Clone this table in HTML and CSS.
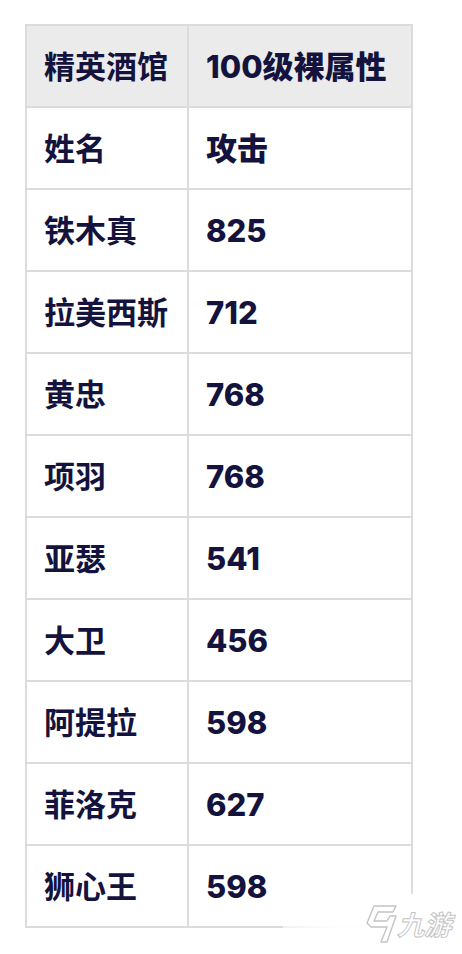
FILE: index.html
```html
<!DOCTYPE html>
<html lang="zh">
<head>
<meta charset="utf-8">
<link rel="stylesheet" href="styles.css">
</head>
<body>
<table class="stats">
  <thead>
    <tr><th>精英酒馆</th><th>100级裸属性</th></tr>
  </thead>
  <tbody>
    <tr><td>姓名</td><td>攻击</td></tr>
    <tr><td>铁木真</td><td>825</td></tr>
    <tr><td>拉美西斯</td><td>712</td></tr>
    <tr><td>黄忠</td><td>768</td></tr>
    <tr><td>项羽</td><td>768</td></tr>
    <tr><td>亚瑟</td><td>541</td></tr>
    <tr><td>大卫</td><td>456</td></tr>
    <tr><td>阿提拉</td><td>598</td></tr>
    <tr><td>菲洛克</td><td>627</td></tr>
    <tr><td>狮心王</td><td>598</td></tr>
  </tbody>
</table>
<div class="watermark">
  <svg class="wm-logo" width="38" height="44" viewBox="0 0 38 44">
    <path d="M12 4 L34 4 L31 10 L16 10 L12 19 L25 19 L28 14 L34 14 L25 40 L19 40 L25 25 L9 25 L5 21 Z" fill="none" stroke="#c4c4c4" stroke-width="1.4" stroke-linejoin="round"/>
  </svg>
  <span class="wm-text">九游</span>
</div>
</body>
</html>
```
FILE: styles.css
```css
html, body {
  margin: 0;
  padding: 0;
  background: #ffffff;
}
body {
  width: 462px;
  height: 954px;
  position: relative;
  overflow: hidden;
  font-family: Inter, "Noto Sans CJK SC", sans-serif;
}
.stats {
  border-collapse: collapse;
  margin: 24px 0 0 25px;
  color: #13133d;
  font-size: 31px;
  font-weight: 700;
}
.stats th,
.stats td {
  border: 2px solid #dcdcdc;
  height: 82px;
  padding: 0 0 0 17px;
  text-align: left;
  vertical-align: middle;
  box-sizing: border-box;
  line-height: 1;
}
.stats th:first-child,
.stats td:first-child {
  width: 162px;
}
.stats th:last-child,
.stats td:last-child {
  width: 224px;
}
.stats th {
  background: #ebebeb;
}
.stats td:last-child,
.stats th:last-child {
  font-weight: 800;
}
.watermark {
  position: absolute;
  left: 283px;
  top: 894px;
  width: 179px;
  height: 60px;
  background: linear-gradient(to right, rgba(255,255,255,0.6), rgba(255,255,255,0.97) 30%, #ffffff);
  display: flex;
  align-items: center;
  justify-content: flex-end;
  gap: 0;
  padding-right: 8px;
  box-sizing: border-box;
}
.wm-logo {
  display: block;
}
.wm-text {
  font-family: "Noto Sans CJK SC", sans-serif;
  font-size: 27px;
  line-height: 1.2;
  font-weight: 700;
  color: transparent;
  -webkit-text-stroke: 1px #c4c4c4;
  transform: skewX(-14deg);
  display: inline-block;
}
```
